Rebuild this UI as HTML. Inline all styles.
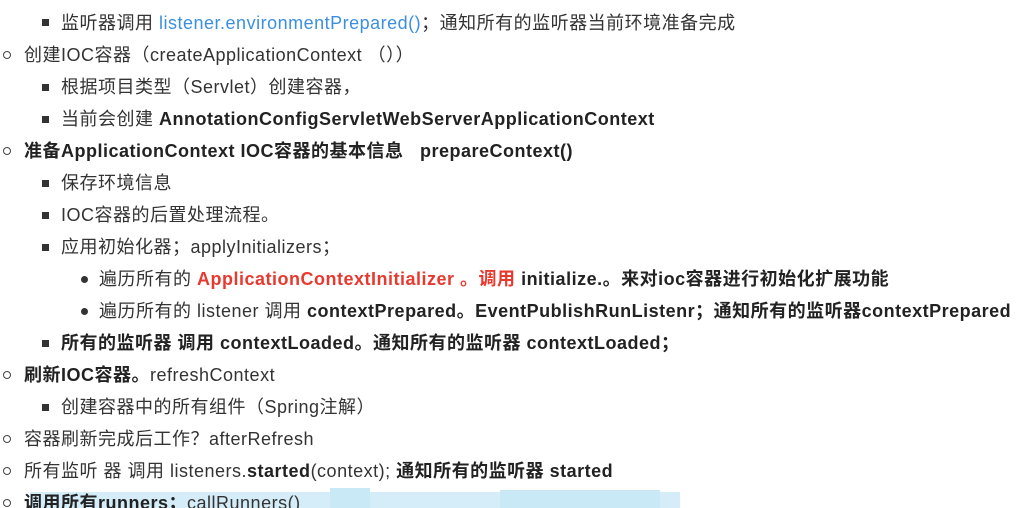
<!DOCTYPE html>
<html><head><meta charset="utf-8"><style>
html,body{margin:0;padding:0;background:#fff;width:1017px;height:508px;overflow:hidden;position:relative}
.l{position:absolute;white-space:nowrap;font-family:"Liberation Sans","Noto Sans CJK SC",sans-serif;font-size:18px;line-height:24px;color:#333;letter-spacing:0.5px}
b{font-weight:bold;color:#222}
.c{position:absolute;width:6px;height:6px;border:1.3px solid #444;border-radius:50%}
.s{position:absolute;width:7px;height:7px;background:#333}
.d{position:absolute;width:7px;height:7px;background:#333;border-radius:50%}
.blue{color:#3b8fe0}.red{color:#e8392f;font-weight:bold}
.bar{position:absolute;background:#c9e9f6}
</style></head><body>
<div class="bar" style="left:30px;top:492px;width:650px;height:16px;opacity:.8"></div>
<div class="bar" style="left:330px;top:488px;width:40px;height:20px"></div>
<div class="bar" style="left:500px;top:490px;width:160px;height:18px"></div>

<div class="s" style="left:42px;top:19px"></div><div class="l" style="left:61px;top:11px">监听器调用 <span class="blue">listener.environmentPrepared()</span>；通知所有的监听器当前环境准备完成</div>
<div class="c" style="left:3px;top:51px"></div><div class="l" style="left:24px;top:43px">创建IOC容器（createApplicationContext （））</div>
<div class="s" style="left:42px;top:84px"></div><div class="l" style="left:61px;top:75px">根据项目类型（Servlet）创建容器，</div>
<div class="s" style="left:42px;top:116px"></div><div class="l" style="left:61px;top:107px">当前会创建 <b>AnnotationConfigServletWebServerApplicationContext</b></div>
<div class="c" style="left:3px;top:147px"></div><div class="l" style="left:24px;top:139px"><b>准备ApplicationContext IOC容器的基本信息&nbsp;&nbsp;&nbsp;prepareContext()</b></div>
<div class="s" style="left:42px;top:180px"></div><div class="l" style="left:61px;top:171px">保存环境信息</div>
<div class="s" style="left:42px;top:212px"></div><div class="l" style="left:61px;top:203px">IOC容器的后置处理流程。</div>
<div class="s" style="left:42px;top:244px"></div><div class="l" style="left:61px;top:235px">应用初始化器；applyInitializers；</div>
<div class="d" style="left:81px;top:276px"></div><div class="l" style="left:99px;top:267px">遍历所有的 <span class="red">ApplicationContextInitializer 。调用</span> <b>initialize.。来对ioc容器进行初始化扩展功能</b></div>
<div class="d" style="left:81px;top:308px"></div><div class="l" style="left:99px;top:299px">遍历所有的 listener 调用 <b>contextPrepared。EventPublishRunListenr；通知所有的监听器contextPrepared</b></div>
<div class="s" style="left:42px;top:340px"></div><div class="l" style="left:61px;top:331px"><b>所有的监听器 调用 contextLoaded。通知所有的监听器 contextLoaded；</b></div>
<div class="c" style="left:3px;top:371px"></div><div class="l" style="left:24px;top:363px"><b>刷新IOC容器。</b>refreshContext</div>
<div class="s" style="left:42px;top:404px"></div><div class="l" style="left:61px;top:395px">创建容器中的所有组件（Spring注解）</div>
<div class="c" style="left:3px;top:435px"></div><div class="l" style="left:24px;top:427px">容器刷新完成后工作？afterRefresh</div>
<div class="c" style="left:3px;top:467px"></div><div class="l" style="left:24px;top:459px">所有监听 器 调用 listeners.<b>started</b>(context); <b>通知所有的监听器 started</b></div>
<div class="c" style="left:3px;top:499px"></div><div class="l" style="left:24px;top:491px"><b>调用所有runners；</b>callRunners()</div>
</body></html>
